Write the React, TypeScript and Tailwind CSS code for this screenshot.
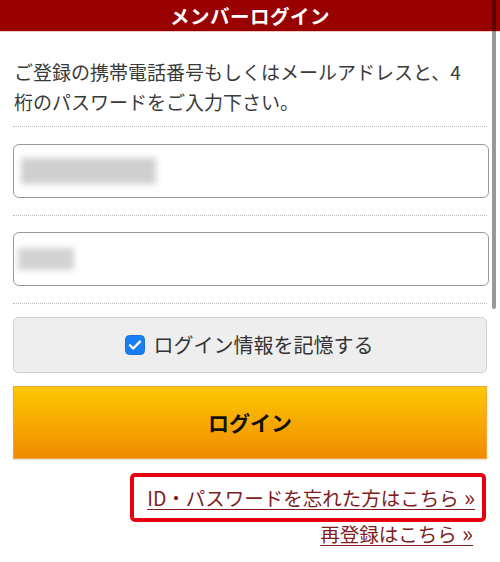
import { useState } from "react";

const font = { fontFamily: '"Noto Sans CJK JP", "Noto Sans", sans-serif' };

const Dotted = () => <div className="border-t border-dotted border-[#bdbdbd]" />;

const Arrow = () => <span className="text-[23px] leading-none">{"\u00a0»"}</span>;

export default function App() {
  const [remember, setRemember] = useState(true);

  return (
    <div className="relative w-[500px] h-[562px] overflow-hidden bg-white text-[#333]" style={font}>
      <header className="h-[32px] bg-[#990000] border-b border-[#f2caca] flex items-center justify-center">
        <h1 className="text-white font-bold text-[19.5px] leading-none tracking-[0.5px]">メンバーログイン</h1>
      </header>

      <div className="px-[13px]">
        <p className="pt-[25px] pb-[9px] pl-[1px] text-[19px] leading-[30px] text-[#3a3a3a]">
          ご登録の携帯電話番号もしくはメールアドレスと、4
          <br />
          桁のパスワードをご入力下さい。
        </p>
        <Dotted />

        <div className="mt-[17px] mr-[-2px] h-[54px] rounded-[6px] border-[1.5px] border-[#9a9a9a] flex items-center pl-[7px]">
          <div className="w-[135px] h-[26px] bg-[#cfcfcf] blur-[3px]" />
        </div>
        <div className="mt-[17px]">
          <Dotted />
        </div>

        <div className="mt-[16px] mr-[-2px] h-[54px] rounded-[6px] border-[1.5px] border-[#9a9a9a] flex items-center pl-[4px]">
          <div className="w-[56px] h-[22px] bg-[#d2d2d2] blur-[3px]" />
        </div>
        <div className="mt-[17px]">
          <Dotted />
        </div>

        <button
          type="button"
          onClick={() => setRemember(!remember)}
          className="mt-[13px] w-full h-[56px] rounded-[5px] border border-[#d0d0d0] bg-[#eeeeee] flex items-center justify-center gap-[9px]"
        >
          <svg width="20" height="20" viewBox="0 0 20 20" className="shrink-0">
            <rect x="0.5" y="0.5" width="19" height="19" rx="4" fill={remember ? "#1a7ef2" : "#fff"} stroke="#1a6fd8" />
            {remember && (
              <path d="M5 10.3l3.2 3.2L15 6.6" fill="none" stroke="#fff" strokeWidth="2.4" strokeLinecap="round" strokeLinejoin="round" />
            )}
          </svg>
          <span className="text-[20px] leading-none text-[#333] pr-[2px]">ログイン情報を記憶する</span>
        </button>

        <button
          type="button"
          className="mt-[13px] w-full h-[73px] border border-[#f3a43a] bg-gradient-to-b from-[#fcc802] to-[#f08a00] shadow-[0_1px_2px_rgba(0,0,0,0.15)] flex items-center justify-center"
        >
          <span className="text-[21px] font-bold text-[#111] leading-none">ログイン</span>
        </button>

        <div className="mt-[14px] flex flex-col items-end">
          <div className="mr-[1px] w-[356px] h-[49px] border-[4px] border-[#e60012] rounded-[5px] flex items-center justify-end pr-[7px]">
            <a href="#" className="text-[19.5px] leading-[26px] text-[#7d1d1d] underline underline-offset-[3px] decoration-[1px]">
              ID・パスワードを忘れた方はこちら
              <Arrow />
            </a>
          </div>
          <a href="#" className="mt-[-1px] mr-[14px] text-[19.5px] leading-[26px] text-[#7d1d1d] underline underline-offset-[3px] decoration-[1px]">
            再登録はこちら
            <Arrow />
          </a>
        </div>
      </div>

      <div className="absolute top-0 right-[4px] w-[4px] h-[309px] rounded-full bg-black/40" />
    </div>
  );
}
